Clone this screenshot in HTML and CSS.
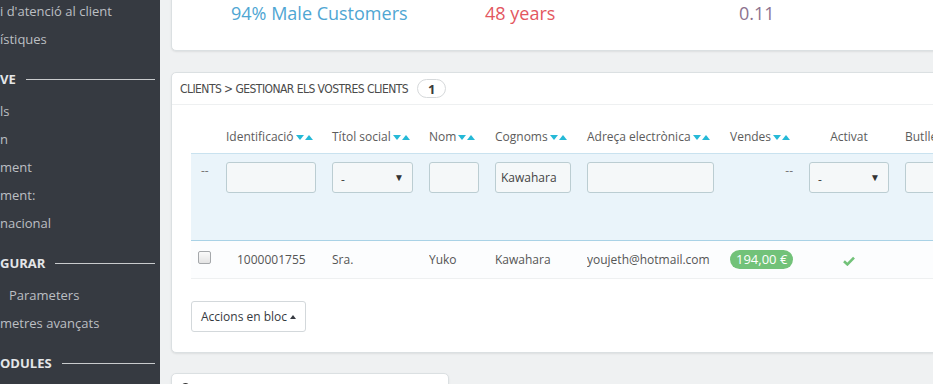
FILE: index.html
```html
<!DOCTYPE html>
<html lang="ca">
<head>
<meta charset="utf-8">
<title>Clients</title>
<link rel="stylesheet" href="styles.css">
</head>
<body>
<div class="page">
  <nav class="sidebar">
    <ul class="nav">
      <li class="item">i d'atenció al client</li>
      <li class="item">ístiques</li>
      <li class="section">VE</li>
      <li class="item">ls</li>
      <li class="item">n</li>
      <li class="item">ment</li>
      <li class="item">ment:</li>
      <li class="item">nacional</li>
      <li class="section">GURAR</li>
      <li class="item indent">Parameters</li>
      <li class="item">metres avançats</li>
      <li class="section">ODULES</li>
    </ul>
  </nav>
  <main class="main">
    <section class="card kpis">
      <div class="kpi blue">94% Male Customers</div>
      <div class="kpi red">48 years</div>
      <div class="kpi purple">0.11</div>
    </section>

    <section class="card list">
      <header class="card-head">
        <span class="head-title">CLIENTS &gt; GESTIONAR ELS VOSTRES CLIENTS</span>
        <span class="count">1</span>
      </header>
      <div class="grid">
        <div class="row labels">
          <div class="c"></div>
          <div class="c">Identificació <span class="sort"><i class="dn"></i><i class="up"></i></span></div>
          <div class="c">Títol social <span class="sort"><i class="dn"></i><i class="up"></i></span></div>
          <div class="c">Nom <span class="sort"><i class="dn"></i><i class="up"></i></span></div>
          <div class="c">Cognoms <span class="sort"><i class="dn"></i><i class="up"></i></span></div>
          <div class="c">Adreça electrònica <span class="sort"><i class="dn"></i><i class="up"></i></span></div>
          <div class="c">Vendes <span class="sort"><i class="dn"></i><i class="up"></i></span></div>
          <div class="c center">Activat</div>
          <div class="c last">Butlletí</div>
        </div>
        <div class="row filters">
          <div class="c dash">--</div>
          <div class="c"><div class="field"></div></div>
          <div class="c"><div class="field select"><span>-</span><span class="arr">▼</span></div></div>
          <div class="c"><div class="field"></div></div>
          <div class="c"><div class="field text">Kawahara</div></div>
          <div class="c"><div class="field"></div></div>
          <div class="c dash right">--</div>
          <div class="c"><div class="field select"><span>-</span><span class="arr">▼</span></div></div>
          <div class="c"><div class="field"></div></div>
        </div>
        <div class="row data">
          <div class="c cb"><span class="check"></span></div>
          <div class="c id">1000001755</div>
          <div class="c">Sra.</div>
          <div class="c">Yuko</div>
          <div class="c">Kawahara</div>
          <div class="c">youjeth@hotmail.com</div>
          <div class="c"><span class="badge">194,00 €</span></div>
          <div class="c center"><svg class="tick" width="12" height="10" viewBox="0 0 12 10"><path d="M1 5.2 L4.4 8.4 L11 1.6" fill="none" stroke="#72c279" stroke-width="2.6"/></svg></div>
          <div class="c"></div>
        </div>
      </div>
      <div class="foot">
        <button class="bulk">Accions en bloc <span class="caret"></span></button>
      </div>
    </section>

    <section class="card small">
      <span class="dot"></span>
    </section>
  </main>
</div>
</body>
</html>
```

FILE: styles.css
```css
* { box-sizing: border-box; }
html, body { margin: 0; padding: 0; }
body {
  font-family: "Open Sans", "Liberation Sans", sans-serif;
  font-size: 13px;
  color: #555;
  background: #eff1f2;
  overflow: hidden;
}
.page { display: flex; height: 384px; overflow: hidden; }

.sidebar {
  width: 160px;
  flex: none;
  background: #363a41;
  overflow: hidden;
}
.nav { list-style: none; margin: -3px 0 0; padding: 0; }
.item {
  height: 28px;
  line-height: 28px;
  color: #bcbfc3;
  white-space: nowrap;
}
.item.indent { padding-left: 9px; }
.section {
  height: 44px;
  padding-top: 8px;
  display: flex;
  align-items: center;
  color: #e4e6e8;
  font-weight: 700;
  white-space: nowrap;
}
.section::after {
  content: "";
  flex: 1;
  border-top: 1px solid #c9cbcd;
  margin: 0 5px 0 10px;
}

.main {
  flex: 1;
  min-width: 0;
  padding-left: 11px;
  overflow: hidden;
}
.card {
  background: #fff;
  border: 1px solid #dbe0e2;
  border-radius: 5px;
  box-shadow: 0 1px 2px rgba(0,0,0,0.08);
  width: 800px;
}

.kpis {
  margin-top: -30px;
  height: 81px;
  padding: 30px 0 0 59px;
  display: flex;
}
.kpi {
  width: 254px;
  font-size: 18px;
  line-height: 24px;
  flex: none;
}
.blue { color: #4fa6d3; }
.red { color: #e3575f; }
.purple { color: #8d738f; }

.list { margin-top: 21px; }
.card-head {
  height: 32px;
  border-bottom: 1px solid #eef0f1;
  display: flex;
  align-items: center;
  padding-left: 8px;
}
.head-title {
  font-family: "DejaVu Sans Condensed", "DejaVu Sans", sans-serif;
  font-stretch: condensed;
  font-size: 12px;
  letter-spacing: -0.55px;
  color: #4a4a4a;
}
.count {
  margin-left: 9px;
  height: 19px;
  min-width: 29px;
  border: 1px solid #d6d9db;
  border-radius: 10px;
  font-size: 13px;
  font-weight: 700;
  color: #3a3a3a;
  display: flex;
  align-items: center;
  justify-content: center;
}

.grid { padding: 0 0 0 19px; font-size: 12px; }
.row {
  display: grid;
  grid-template-columns: 35px 106px 97px 66px 92px 143px 79px 96px 100px;
}
.c { padding-right: 16px; white-space: nowrap; overflow: hidden; }
.c.last, .c.cb { overflow: visible; }
.center { text-align: center; }
.right { text-align: right; }

.labels {
  height: 48px;
  align-items: end;
  padding-bottom: 7px;
  color: #5c5c5c;
}
.labels .c { line-height: 18px; overflow: visible; }
.sort { display: inline-flex; gap: 1px; vertical-align: middle; margin-left: -1px; }
.sort i { width: 0; height: 0; border-left: 4.5px solid transparent; border-right: 4.5px solid transparent; }
.sort .dn { border-top: 5px solid #25b9d7; }
.sort .up { border-bottom: 5px solid #25b9d7; }

.filters {
  height: 88px;
  background: #eaf4fa;
  border-top: 1px solid #c9e2ef;
  border-bottom: 1px solid #a9d2e6;
  padding-top: 8px;
}
.dash { padding-left: 10px; line-height: 18px; color: #777; font-size: 12px; }
.field {
  height: 31px;
  background: #f5f8f9;
  border: 1px solid #bbcdd2;
  border-radius: 3px;
  padding: 0 8px;
  display: flex;
  align-items: center;
  font-size: 12px;
  color: #444;
}
.field.text { padding-left: 5px; }
.select { justify-content: space-between; padding-top: 4px; }
.arr { font-size: 10px; color: #333; margin-top: -6px; }

.data {
  height: 38px;
  align-items: center;
  background: #fcfdfe;
  border-bottom: 1px solid #eef0f1;
}
.data .c { color: #555; }
.id { padding-left: 11px; }
.check {
  display: block;
  width: 13px;
  height: 13px;
  margin: -4px 0 0 7px;
  border: 1px solid #a5a8ab;
  border-radius: 2px;
  background: linear-gradient(#fafafa, #e4e4e4);
}
.badge {
  display: inline-block;
  background: #72c279;
  color: #fff;
  border-radius: 10px;
  padding: 0 6px;
  height: 19px;
  line-height: 19px;
  font-size: 13px;
}
.tick { vertical-align: middle; }

.foot { padding: 22px 0 20px 19px; }
.bulk {
  height: 31px;
  padding: 0 9px;
  background: #fff;
  border: 1px solid #d3d8db;
  border-radius: 3px;
  font-family: "Open Sans", "Liberation Sans", sans-serif;
  font-size: 12px;
  color: #363a41;
  display: inline-flex;
  align-items: center;
  gap: 3px;
}
.caret { width: 0; height: 0; border-left: 3.5px solid transparent; border-right: 3.5px solid transparent; border-bottom: 4px solid #363a41; }

.small {
  width: 278px;
  height: 40px;
  margin-top: 20px;
}
.dot {
  display: block;
  width: 9px;
  height: 9px;
  border-radius: 50%;
  background: #333;
  margin: 9px 0 0 9px;
}
```
